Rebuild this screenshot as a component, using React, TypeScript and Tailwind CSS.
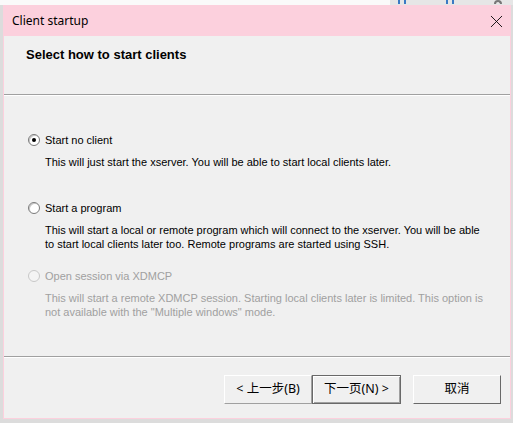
import { X } from "lucide-react";

const ui = { fontFamily: '"Liberation Sans", "Noto Sans CJK SC", sans-serif' };
const cjk = { fontFamily: '"Noto Sans", "Noto Sans CJK SC", sans-serif' };

type Option = {
  label: string;
  lines: string[];
  checked?: boolean;
  disabled?: boolean;
};

const options: Option[] = [
  {
    label: "Start no client",
    lines: ["This will just start the xserver. You will be able to start local clients later."],
    checked: true,
  },
  {
    label: "Start a program",
    lines: [
      "This will start a local or remote program which will connect to the xserver. You will be able",
      "to start local clients later too. Remote programs are started using SSH.",
    ],
  },
  {
    label: "Open session via XDMCP",
    lines: [
      "This will start a remote XDMCP session. Starting local clients later is limited. This option is",
      'not available with the "Multiple windows" mode.',
    ],
    disabled: true,
  },
];

function Radio({ checked, disabled }: { checked?: boolean; disabled?: boolean }) {
  return (
    <span
      className={`relative flex h-[12px] w-[12px] shrink-0 items-center justify-center rounded-full border ${
        disabled
          ? "border-[#c8c8c8] bg-[#f4f4f4]"
          : "border-[#7a7a7a] bg-white shadow-[inset_1px_1px_0_#c8c8c8]"
      }`}
    >
      {checked && <span className="h-[4px] w-[4px] rounded-full bg-black" />}
    </span>
  );
}

function Separator() {
  return (
    <div>
      <div className="h-px bg-[#a0a0a0]" />
      <div className="h-px bg-white" />
    </div>
  );
}

export default function App() {
  return (
    <div className="relative h-[423px] w-[513px] overflow-hidden bg-[#dcdcdc]">
      {/* background window strip peeking above */}
      <div className="flex h-[5px]">
        <div className="w-[390px] bg-[#fafafa]" />
        <div className="flex flex-1 gap-[40px] bg-[#e6e6e6] pl-[8px]">
          <span className="h-[4px] w-[8px] border-x-2 border-[#3a79c4]" />
          <span className="h-[4px] w-[8px] border-x-2 border-[#3a79c4]" />
          <span className="h-[4px] w-[8px] rounded-t-full border-x-2 border-t-2 border-[#777]" />
        </div>
      </div>

      {/* dialog */}
      <div
        className="ml-[3px] flex h-[414px] w-[508px] flex-col border border-[#fcd0dd] bg-[#f0f0f0] text-black"
        style={ui}
      >
        <div className="flex h-[30px] shrink-0 items-center justify-between bg-[#fcd0dd] pl-[8px] pr-[3px]">
          <span className="text-[12px]" style={cjk}>
            Client startup
          </span>
          <X size={21} strokeWidth={1} className="text-black" />
        </div>

        <div className="flex h-[58px] shrink-0 items-start pl-[22px] pt-[9px]">
          <span className="text-[13px] font-bold">Select how to start clients</span>
        </div>
        <Separator />

        <div className="flex flex-1 flex-col pl-[24px] pt-[37px]">
          {options.map((o, i) => (
            <div key={i} className={`h-[68px] ${o.disabled ? "text-[#a0a0a0]" : ""}`}>
              <label className="flex h-[14px] items-center gap-[5px] text-[11px]">
                <Radio checked={o.checked} disabled={o.disabled} />
                <span>{o.label}</span>
              </label>
              <div className="mt-[8px] pl-[17px] text-[11px] leading-[14px]">
                {o.lines.map((l, j) => (
                  <div key={j}>{l}</div>
                ))}
              </div>
            </div>
          ))}
        </div>

        <Separator />
        <div className="flex h-[60px] shrink-0 items-start pl-[220px] pt-[17px] text-[12.5px]" style={cjk}>
          <button className="h-[29px] w-[88px] border border-b-[#a0a0a0] border-l-white border-r-[#a0a0a0] border-t-white bg-[#f0f0f0]">
            &lt; 上一步(B)
          </button>
          <button className="h-[29px] w-[89px] border border-[#696969] bg-[#f0f0f0] shadow-[inset_1px_1px_0_#fff,inset_-1px_-1px_0_#a0a0a0]">
            下一页(N) &gt;
          </button>
          <button className="ml-[12px] h-[29px] w-[88px] border border-b-[#696969] border-l-white border-r-[#696969] border-t-white bg-[#f0f0f0]">
            取消
          </button>
        </div>
      </div>
    </div>
  );
}
